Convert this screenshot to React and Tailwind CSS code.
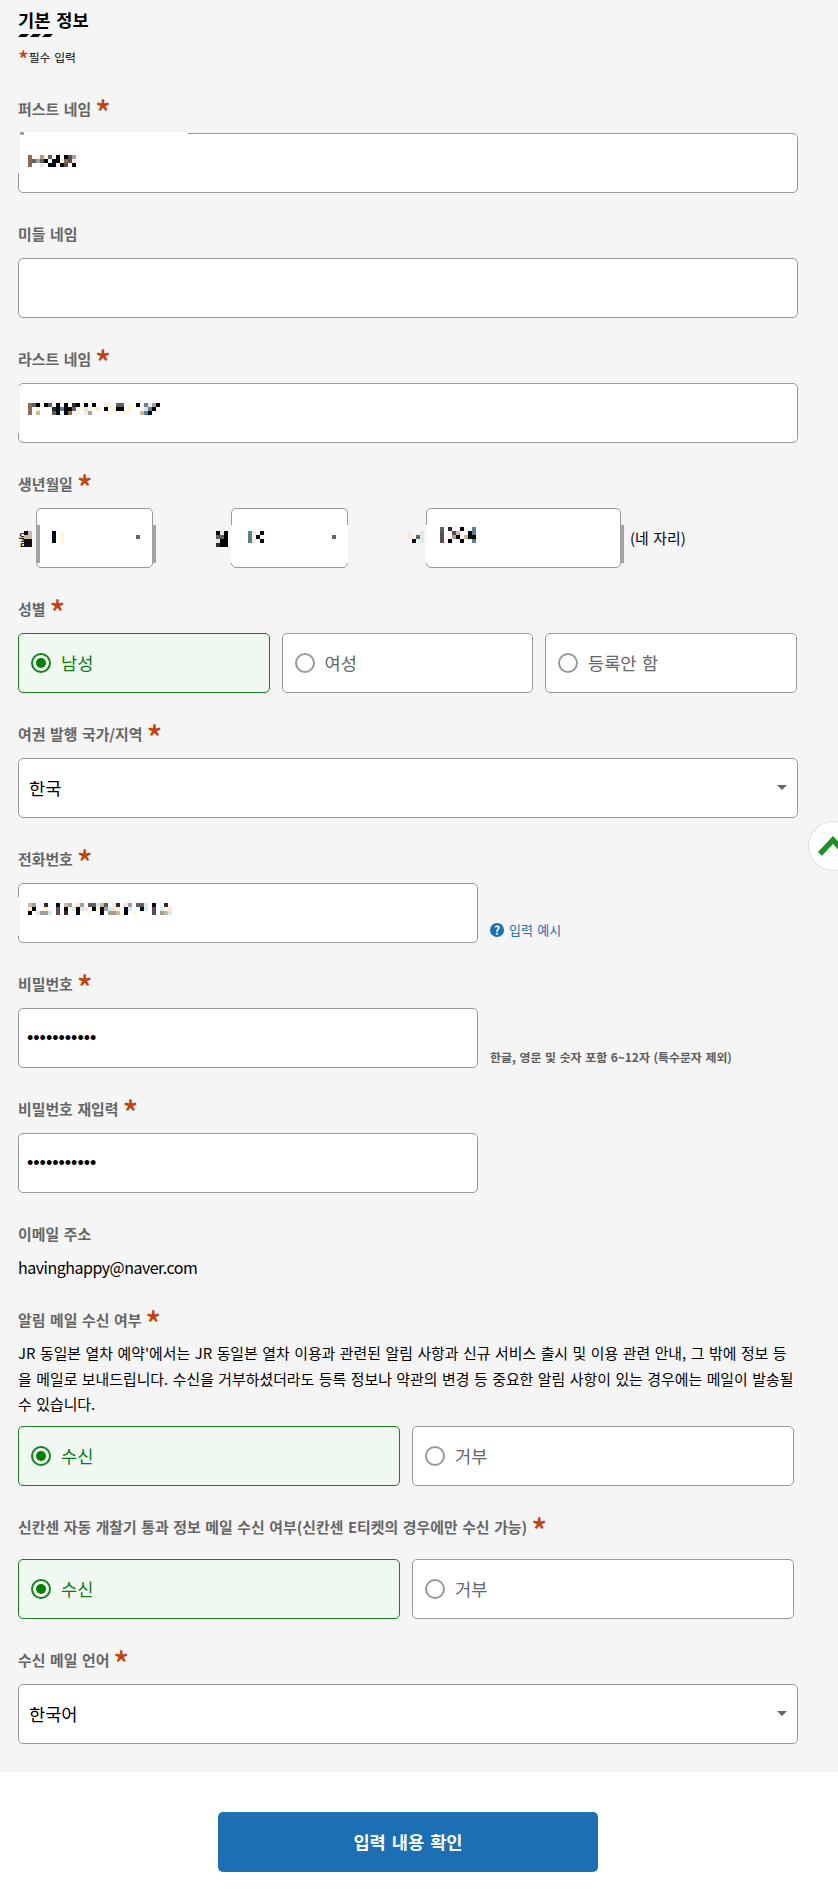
import { clsx } from "clsx";

// One letter per mosaic cell; spaces stay transparent
const CELL_COLORS = {
  k: "#020204",
  n: "#020a1c",
  d: "#33292a",
  g: "#62605f",
  G: "#a3a09c",
  b: "#8d6a55",
  p: "#604a58",
  s: "#5c7f95",
  t: "#cdb79f",
  y: "#fff8d6",
  c: "#f9e6da",
  l: "#d9e9ee",
};

const MASKS = {
  first: ["b yGyg n kpG ", "bgGgk nkybpc ", "b  l nn kp k "],
  last: [
    "bgk kg k k dk k k  cy gg y k scGk",
    "b y   dnsnkg ylyyc k ykk y   lsk ",
    "b t   gn nb y cG    y   y   tsn  ",
  ],
  month: ["n y", "n y", "n y"],
  day: ["sc n", "syk ", "sc n"],
  year: ["g d  k  s", "p  pt  ks", "p  Gk tnk", "p k  k  s"],
  phone: [
    "tG  d  n tG cG ggltg cd cG ggl n  d ",
    "ck  y  p n lklc kykGlcy nl  nl p lyc",
    "k lGGl p d  n  y  n GGt k y    p Gtl",
  ],
  dayLabel: ["kln", "ggk", "lkk", "dkk"],
  yearLabel: ["c  l", "c gl", " n l"],
};

function Mosaic({ rows, className }) {
  const width = rows[0].length * 4;
  const height = rows.length * 4;

  return (
    <svg
      width={width}
      height={height}
      viewBox={`0 0 ${width} ${height}`}
      shapeRendering="crispEdges"
      className={clsx("shrink-0", className)}
    >
      {rows.map((row, y) =>
        row.split("").map((cell, x) =>
          CELL_COLORS[cell] ? (
            <rect key={`${x}-${y}`} x={x * 4} y={y * 4} width="4" height="4" fill={CELL_COLORS[cell]} />
          ) : null
        )
      )}
    </svg>
  );
}

function Label({ children, required }) {
  return (
    <div className="flex h-6 items-center text-[14.9px] font-bold whitespace-nowrap text-[#666] [word-spacing:1.2px]">
      <span>{children}</span>
      {required && (
        <span className="ml-1 h-6 text-[33px] leading-[30px] font-medium text-[#c1440e]">*</span>
      )}
    </div>
  );
}

function Field({ label, required, children }) {
  return (
    <div className="mb-[29px]">
      <Label required={required}>{label}</Label>
      <div className="mt-3">{children}</div>
    </div>
  );
}

function Box({ className, children }) {
  return (
    <div className={clsx("relative flex h-15 rounded-[5px] border border-[#999] bg-white", className)}>
      {children}
    </div>
  );
}

function Select({ value }) {
  return (
    <Box className="w-[780px] items-center justify-between pr-[10px] pl-[10px]">
      <span className="text-[17.6px] text-black">{value}</span>
      <svg width="10" height="5" viewBox="0 0 10 5" className="mb-px">
        <path d="M0 0h10L5 5z" fill="#666" />
      </svg>
    </Box>
  );
}

function Radio({ label, checked, className }) {
  return (
    <div
      className={clsx(
        "flex h-15 items-center rounded-[5px] border pl-3 text-[17.6px] [word-spacing:1.4px]",
        checked ? "border-[#1b7a22] bg-[#f0f8f2] text-[#0b7d12]" : "border-[#999] bg-white text-[#666]",
        className
      )}
    >
      <span
        className={clsx(
          "mr-[10px] flex size-5 items-center justify-center rounded-full border-2",
          checked ? "border-[#14801b]" : "border-[#999]"
        )}
      >
        {checked && <span className="size-[10px] rounded-full bg-[#008000]" />}
      </span>
      {label}
    </div>
  );
}

function Password() {
  return (
    <Box className="w-[460px] pl-2">
      <span className="font-['Liberation_Sans',sans-serif] text-[18px] leading-[58px] text-black">
        •••••••••••
      </span>
    </Box>
  );
}

function BirthDate() {
  return (
    <div className="flex h-15">
      <div className="relative w-[18px] overflow-hidden">
        <span className="absolute top-[19px] left-0 text-[14.8px] leading-[24px] text-black">월</span>
        <span className="absolute top-[23px] left-[6px] h-2 w-[8px] bg-[#c9b8ab]" />
        <span className="absolute top-[23px] left-[6px] size-1 bg-[#15100f]" />
        <span className="absolute top-[31px] left-[6px] h-2 w-[8px] bg-[#15100f]" />
      </div>
      <Box className="w-[117px]">
        <span className="absolute top-4 -left-px h-[38px] w-1 bg-[#a3a3a3]" />
        <span className="absolute top-4 left-[115px] h-[38px] w-1 bg-[#a3a3a3]" />
        <Mosaic rows={MASKS.month} className="mt-[22px] ml-[15px]" />
        <span className="absolute top-[26px] right-[12px] size-1 bg-[#666]" />
      </Box>

      <Mosaic rows={MASKS.dayLabel} className="mt-[23px] mr-[3px] ml-[63px]" />
      <Box className="w-[117px]">
        <span className="absolute top-4 -left-px h-[38px] w-1 bg-white" />
        <span className="absolute top-4 -right-px h-[38px] w-1 bg-white" />
        <Mosaic rows={MASKS.day} className="mt-[22px] ml-[16px]" />
        <span className="absolute top-[26px] right-[11px] size-1 bg-[#666]" />
      </Box>

      <Mosaic rows={MASKS.yearLabel} className="mt-[23px] mr-[2px] ml-[60px]" />
      <Box className="w-[195px]">
        <span className="absolute top-4 -left-px h-[38px] w-1 bg-white" />
        <span className="absolute top-4 left-[193px] h-[38px] w-1 bg-[#a3a3a3]" />
        <Mosaic rows={MASKS.year} className="mt-[18px] ml-[13px]" />
      </Box>
      <span className="ml-[9px] self-center text-[14.9px] text-black [word-spacing:1.2px]">(네 자리)</span>
    </div>
  );
}

export default function App() {
  return (
    <div className="relative h-[1895px] w-[838px] overflow-hidden bg-white font-['Noto_Sans_CJK_KR',sans-serif]">
      <main className="h-[1772px] bg-[#f5f5f5] pt-2 pl-[18px]">
        <h1 className="h-[26px] text-[17.6px] leading-[24px] font-bold text-black [word-spacing:2px]">기본 정보</h1>
        <svg width="36" height="4" viewBox="0 0 36 4">
          <path d="M3 0h8L8 3H0zM15 0h8l-3 3h-8zM27 0h8l-3 3h-8z" fill="#000" />
        </svg>
        <p className="mt-[14px] mb-[35px] flex h-[10px] items-center text-[11.8px] text-black [word-spacing:1.2px]">
          <span className="h-[10px] text-[22px] leading-[12px] font-medium text-[#c1440e]">*</span>
          필수 입력
        </p>

        <Field label="퍼스트 네임" required>
          <Box className="w-[780px]">
            <span className="absolute -top-[2px] left-px h-1 w-[168px] bg-white" />
            <span className="absolute -top-[2px] -left-px h-[41px] w-[2px] bg-[#f5f5f5]" />
            <span className="absolute -top-[2px] left-px h-[3px] w-1 bg-[#a3a3a3]" />
            <Mosaic rows={MASKS.first} className="mt-[21px] ml-[9px]" />
          </Box>
        </Field>

        <Field label="미들 네임">
          <Box className="w-[780px]" />
        </Field>

        <Field label="라스트 네임" required>
          <Box className="w-[780px]">
            <span className="absolute top-[2px] -left-px h-[47px] w-[2px] bg-[#f5f5f5]" />
            <Mosaic rows={MASKS.last} className="mt-[19px] ml-[9px]" />
          </Box>
        </Field>

        <Field label="생년월일" required>
          <BirthDate />
        </Field>

        <Field label="성별" required>
          <div className="flex gap-3">
            <Radio label="남성" checked className="w-[251.5px]" />
            <Radio label="여성" className="w-[251.5px]" />
            <Radio label="등록안 함" className="w-[251.5px]" />
          </div>
        </Field>

        <Field label="여권 발행 국가/지역" required>
          <Select value="한국" />
        </Field>

        <Field label="전화번호" required>
          <div className="flex items-end gap-3">
            <Box className="w-[460px]">
              <span className="absolute top-[13px] -left-px h-[39px] w-[2px] bg-[#f5f5f5]" />
              <Mosaic rows={MASKS.phone} className="mt-[19px] ml-[9px]" />
            </Box>
            <a className="mb-[2px] flex items-center text-[13px] leading-[22px] text-[#1b6fb2] [word-spacing:1.5px]">
              <span className="mr-[5px] flex size-[14px] items-center justify-center rounded-full bg-[#1b6fb2] text-[12px] leading-[14px] font-bold text-white">
                ?
              </span>
              입력 예시
            </a>
          </div>
        </Field>

        <Field label="비밀번호" required>
          <div className="flex items-end gap-3">
            <Password />
            <span className="mb-px text-[11.9px] leading-[20px] font-bold text-[#5c5c5c] [word-spacing:1px]">
              한글, 영문 및 숫자 포함 6~12자 (특수문자 제외)
            </span>
          </div>
        </Field>

        <Field label="비밀번호 재입력" required>
          <Password />
        </Field>

        <Label>이메일 주소</Label>
        <p className="mt-[9px] h-[25px] text-[16px] leading-6 tracking-[-0.5px] text-black">havinghappy@naver.com</p>

        <div className="mt-7">
          <Label required>알림 메일 수신 여부</Label>
          <p className="mt-[8px] text-[14.9px] leading-[25.6px] whitespace-nowrap text-black [word-spacing:1.2px]">
            JR 동일본 열차 예약'에서는 JR 동일본 열차 이용과 관련된 알림 사항과 신규 서비스 출시 및 이용 관련 안내, 그 밖에 정보 등
            <br />
            을 메일로 보내드립니다. 수신을 거부하셨더라도 등록 정보나 약관의 변경 등 중요한 알림 사항이 있는 경우에는 메일이 발송될
            <br />
            수 있습니다.
          </p>
          <div className="mt-[9px] flex gap-3">
            <Radio label="수신" checked className="w-[382px]" />
            <Radio label="거부" className="w-[382px]" />
          </div>
        </div>

        <div className="mt-[29px]">
          <Label required>신칸센 자동 개찰기 통과 정보 메일 수신 여부(신칸센 E티켓의 경우에만 수신 가능)</Label>
          <div className="mt-5 mb-[29px] flex gap-3">
            <Radio label="수신" checked className="w-[382px]" />
            <Radio label="거부" className="w-[382px]" />
          </div>
        </div>

        <Field label="수신 메일 언어" required>
          <Select value="한국어" />
        </Field>
      </main>

      <button className="mt-10 ml-[218px] h-15 w-[380px] rounded-[5px] bg-[#1b6fb2] text-[17.6px] font-bold text-white [word-spacing:2px]">
        입력 내용 확인
      </button>

      {/* Scroll to top */}
      <button className="absolute top-[821px] left-[808px] flex size-[50px] items-center justify-center rounded-full border border-[#ddd] bg-white">
        <svg width="30" height="20" viewBox="0 0 30 20" fill="none" stroke="#22902a" strokeWidth="5.5">
          <path d="M2 18L15 4l13 14" />
        </svg>
      </button>
    </div>
  );
}
